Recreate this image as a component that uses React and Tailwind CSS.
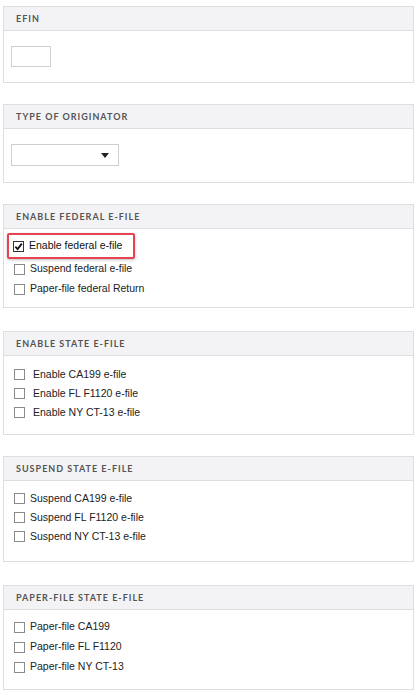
import React from "react";

const Check = ({ checked }) =>
  checked ? (
    <span className="flex h-[11px] w-[11px] shrink-0 items-center justify-center border border-[#333] bg-white">
      <svg viewBox="0 0 10 10" className="h-[9px] w-[9px]">
        <path d="M1.5 5.2 L4 7.8 L8.7 1.8" fill="none" stroke="#111" strokeWidth="2" />
      </svg>
    </span>
  ) : (
    <span className="h-[11px] w-[11px] shrink-0 border border-[#8a8a8a] bg-white"></span>
  );

const Row = ({ label, h = "h-[20px]", gap = "gap-[5px]" }) => (
  <div className={`flex items-center ${h} ${gap} pl-[10px]`}>
    <Check />
    <span>{label}</span>
  </div>
);

const Panel = ({ title, className = "", bodyClass = "", children }) => (
  <div className={`border border-[#dedee2] bg-white ${className}`}>
    <div className="flex h-[24px] items-center border-b border-[#dedee2] bg-[#f3f3f5] px-[12px] font-['Lato',sans-serif] text-[9px] font-bold uppercase tracking-[1px] text-[#555]">
      {title}
    </div>
    <div className={bodyClass}>{children}</div>
  </div>
);

export default function App() {
  return (
    <div className="w-[419px] bg-white pl-[3px] pr-[5px] pt-[6px] pb-[4px] font-['Liberation_Sans',Arial,sans-serif] text-[10.5px] text-[#222]">
      <Panel title="EFIN" bodyClass="h-[51px] pl-[7px] pt-[15px]">
        <div className="h-[21px] w-[40px] border border-[#cfcfcf] bg-white"></div>
      </Panel>

      <Panel title="Type of Originator" className="mt-[21px]" bodyClass="h-[53px] pl-[7px] pt-[15px]">
        <div className="flex h-[22px] w-[108px] items-center justify-end border border-[#cfcfcf] bg-white pr-[9px]">
          <svg viewBox="0 0 8 5" className="h-[5px] w-[8px]">
            <path d="M0 0 H8 L4 5 Z" fill="#222" />
          </svg>
        </div>
      </Panel>

      <Panel title="Enable Federal E-File" className="mt-[21px]" bodyClass="pt-[4px] pb-[8px]">
        <div className="ml-[3px] flex h-[26px] w-[128px] items-center gap-[5px] rounded-[2px] border-2 border-[#e8424f] pl-[4px] shadow-[0_1px_3px_rgba(0,0,0,0.25)]">
          <Check checked />
          <span className="text-[#111]">Enable federal e-file</span>
        </div>
        <Row label="Suspend federal e-file" />
        <Row label="Paper-file federal Return" />
      </Panel>

      <Panel title="Enable State E-File" className="mt-[23px]" bodyClass="pt-[9px] pb-[12px]">
        <Row label="Enable CA199 e-file" h="h-[19px]" gap="gap-[8px]" />
        <Row label="Enable FL F1120 e-file" h="h-[19px]" gap="gap-[8px]" />
        <Row label="Enable NY CT-13 e-file" h="h-[19px]" gap="gap-[8px]" />
      </Panel>

      <Panel title="Suspend State E-File" className="mt-[21px]" bodyClass="pt-[8px] pb-[15px]">
        <Row label="Suspend CA199 e-file" h="h-[19px]" />
        <Row label="Suspend FL F1120 e-file" h="h-[19px]" />
        <Row label="Suspend NY CT-13 e-file" h="h-[19px]" />
      </Panel>

      <Panel title="Paper-File State E-File" className="mt-[23px]" bodyClass="pt-[7px] pb-[12px]">
        <Row label="Paper-file CA199" />
        <Row label="Paper-file FL F1120" />
        <Row label="Paper-file NY CT-13" />
      </Panel>
    </div>
  );
}
